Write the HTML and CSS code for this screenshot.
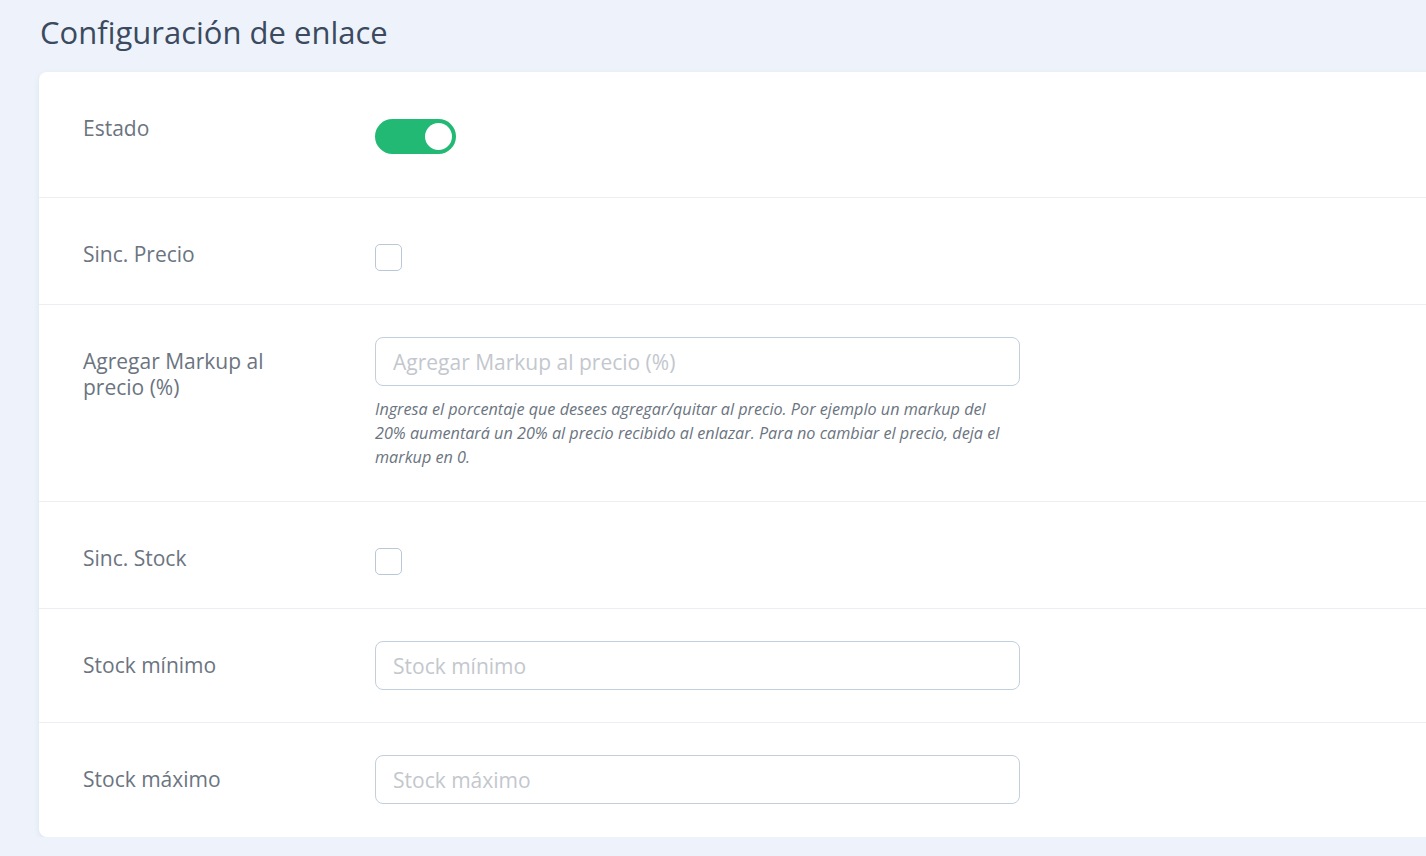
FILE: index.html
```html
<!DOCTYPE html>
<html lang="es">
<head>
<meta charset="utf-8">
<title>Configuración de enlace</title>
<link rel="stylesheet" href="styles.css">
</head>
<body>
<div class="page">
  <h1 class="title">Configuración de enlace</h1>
  <div class="card">
    <div class="row">
      <div class="label">Estado</div>
      <div class="control ctrl-toggle">
        <span class="toggle"><span class="knob"></span></span>
      </div>
    </div>
    <div class="row">
      <div class="label">Sinc. Precio</div>
      <div class="control ctrl-check"><span class="check"></span></div>
    </div>
    <div class="row">
      <div class="label">Agregar Markup al<br>precio (%)</div>
      <div class="control">
        <input class="input" type="text" placeholder="Agregar Markup al precio (%)">
        <p class="help">Ingresa el porcentaje que desees agregar/quitar al precio. Por ejemplo un markup del 20% aumentará un 20% al precio recibido al enlazar. Para no cambiar el precio, deja el markup en 0.</p>
      </div>
    </div>
    <div class="row">
      <div class="label">Sinc. Stock</div>
      <div class="control ctrl-check"><span class="check"></span></div>
    </div>
    <div class="row">
      <div class="label">Stock mínimo</div>
      <div class="control">
        <input class="input" type="text" placeholder="Stock mínimo">
      </div>
    </div>
    <div class="row last">
      <div class="label">Stock máximo</div>
      <div class="control">
        <input class="input" type="text" placeholder="Stock máximo">
      </div>
    </div>
  </div>
</div>
</body>
</html>
```

FILE: styles.css
```css
html, body {
  margin: 0;
  padding: 0;
  background: #eef3fb;
  overflow: hidden;
}
body {
  font-family: "Open Sans", "Noto Sans", sans-serif;
}
.page {
  padding: 0 0 0 39px;
}
.title {
  margin: 0;
  height: 72px;
  line-height: 64px;
  font-size: 31px;
  font-weight: 400;
  color: #3b4a5f;
  padding-left: 1px;
}
.card {
  background: #ffffff;
  border-radius: 8px;
  margin-right: -40px;
  box-shadow: 0 2px 6px rgba(30, 50, 90, 0.08);
}
.row {
  display: flex;
  padding: 32px 0 32px 44px;
  border-bottom: 1px solid #ebeef2;
}
.row.last {
  border-bottom: none;
  padding-bottom: 33px;
}
.label {
  width: 292px;
  flex: none;
  padding-top: 11px;
  font-size: 21px;
  line-height: 26px;
  color: #6b7480;
}
.control {
  width: 645px;
}
.ctrl-toggle {
  height: 61px;
}
.ctrl-check {
  height: 42px;
}
.toggle {
  display: block;
  margin-top: 15px;
  width: 81px;
  height: 35px;
  border-radius: 18px;
  background: #22b974;
  position: relative;
}
.knob {
  position: absolute;
  right: 4px;
  top: 4px;
  width: 27px;
  height: 27px;
  border-radius: 50%;
  background: #ffffff;
}
.check {
  display: block;
  margin-top: 14px;
  width: 25px;
  height: 25px;
  border: 1.5px solid #b9c7d7;
  border-radius: 5px;
}
.input {
  display: block;
  box-sizing: border-box;
  width: 645px;
  height: 49px;
  border: 1px solid #c3cfdb;
  border-radius: 8px;
  padding: 0 17px;
  font-family: inherit;
  font-size: 21px;
  color: #3b4a5f;
  outline: none;
}
.input::placeholder {
  color: #c3c7cd;
}
.help {
  margin: 11px 0 0;
  width: 640px;
  font-size: 16.2px;
  line-height: 24px;
  font-style: italic;
  color: #6b7480;
}
```
